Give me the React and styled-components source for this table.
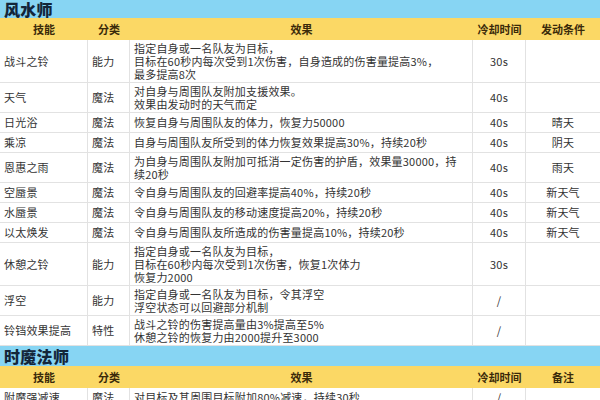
import styled, { createGlobalStyle } from 'styled-components';

const GlobalStyle = createGlobalStyle`
  html, body {
    margin: 0;
    padding: 0;
    background: #fff;
  }
  body {
    width: 600px;
    height: 400px;
    overflow: hidden;
    font-family: "Noto Sans CJK SC", "Noto Sans", sans-serif;
  }
`;

const COLS = '88px 42px 343px 53px 74px';

const Page = styled.div`
  display: flex;
  flex-direction: column;
  width: 600px;
`;

const SectionTitle = styled.div`
  height: ${(props) => props.$h || 20}px;
  background-color: #87d5f3;
  display: flex;
  align-items: center;
  padding-left: 4px;
  font-size: 16px;
  font-weight: 900;
  color: #13263a;
  letter-spacing: 0.3px;
  overflow: hidden;
`;

const HeadRow = styled.div`
  display: grid;
  grid-template-columns: ${COLS};
  height: 22px;
  background-color: #fbd865;
`;

const HeadCell = styled.div`
  display: flex;
  align-items: center;
  justify-content: center;
  font-size: 11px;
  font-weight: 700;
  color: #3a2a0a;
`;

const Row = styled.div`
  display: grid;
  grid-template-columns: ${COLS};
  min-height: 19px;
  border-bottom: 1px solid #e2e2e2;
`;

const Cell = styled.div`
  display: flex;
  flex-direction: column;
  justify-content: center;
  align-items: ${(props) => (props.$center ? 'center' : 'flex-start')};
  padding: 1.5px 4px;
  font-size: 11px;
  line-height: 13px;
  letter-spacing: 0.2px;
  color: #333;
  white-space: nowrap;
  border-right: ${(props) => (props.$last ? 'none' : '1px solid #e2e2e2')};
`;

const Line = styled.span`
  display: block;
`;

const fengshui = [
  ['战斗之铃', '能力', ['指定自身或一名队友为目标，', '目标在60秒内每次受到1次伤害，自身造成的伤害量提高3%，', '最多提高8次'], '30s', ''],
  ['天气', '魔法', ['对自身与周围队友附加支援效果。', '效果由发动时的天气而定'], '40s', ''],
  ['日光浴', '魔法', ['恢复自身与周围队友的体力，恢复力50000'], '40s', '晴天'],
  ['乘凉', '魔法', ['自身与周围队友所受到的体力恢复效果提高30%，持续20秒'], '40s', '阴天'],
  ['恩惠之雨', '魔法', ['为自身与周围队友附加可抵消一定伤害的护盾，效果量30000，持', '续20秒'], '40s', '雨天'],
  ['空蜃景', '魔法', ['令自身与周围队友的回避率提高40%，持续20秒'], '40s', '新天气'],
  ['水蜃景', '魔法', ['令自身与周围队友的移动速度提高20%，持续20秒'], '40s', '新天气'],
  ['以太焕发', '魔法', ['令自身与周围队友所造成的伤害量提高10%，持续20秒'], '40s', '新天气'],
  ['休憩之铃', '能力', ['指定自身或一名队友为目标，', '目标在60秒内每次受到1次伤害，恢复1次体力', '恢复力2000'], '30s', ''],
  ['浮空', '能力', ['指定自身或一名队友为目标，令其浮空', '浮空状态可以回避部分机制'], '/', ''],
  ['铃铛效果提高', '特性', ['战斗之铃的伤害提高量由3%提高至5%', '休憩之铃的恢复力由2000提升至3000'], '/', ''],
];

const timeMage = [
  ['附魔强减速', '魔法', ['对目标及其周围目标附加80%减速，持续30秒'], '/', ''],
];

function Section({ title, titleHeight, lastHead, rows }) {
  return (
    <>
      <SectionTitle $h={titleHeight}>{title}</SectionTitle>
      <HeadRow>
        <HeadCell>技能</HeadCell>
        <HeadCell>分类</HeadCell>
        <HeadCell>效果</HeadCell>
        <HeadCell>冷却时间</HeadCell>
        <HeadCell>{lastHead}</HeadCell>
      </HeadRow>
      {rows.map(([name, kind, effect, cd, cond]) => (
        <Row key={name}>
          <Cell>{name}</Cell>
          <Cell>{kind}</Cell>
          <Cell>
            {effect.map((line) => (
              <Line key={line}>{line}</Line>
            ))}
          </Cell>
          <Cell $center>{cd}</Cell>
          <Cell $center $last>{cond}</Cell>
        </Row>
      ))}
    </>
  );
}

export default function App() {
  return (
    <Page>
      <GlobalStyle />
      <Section title="风水师" titleHeight={18} lastHead="发动条件" rows={fengshui} />
      <Section title="时魔法师" titleHeight={20} lastHead="备注" rows={timeMage} />
    </Page>
  );
}
